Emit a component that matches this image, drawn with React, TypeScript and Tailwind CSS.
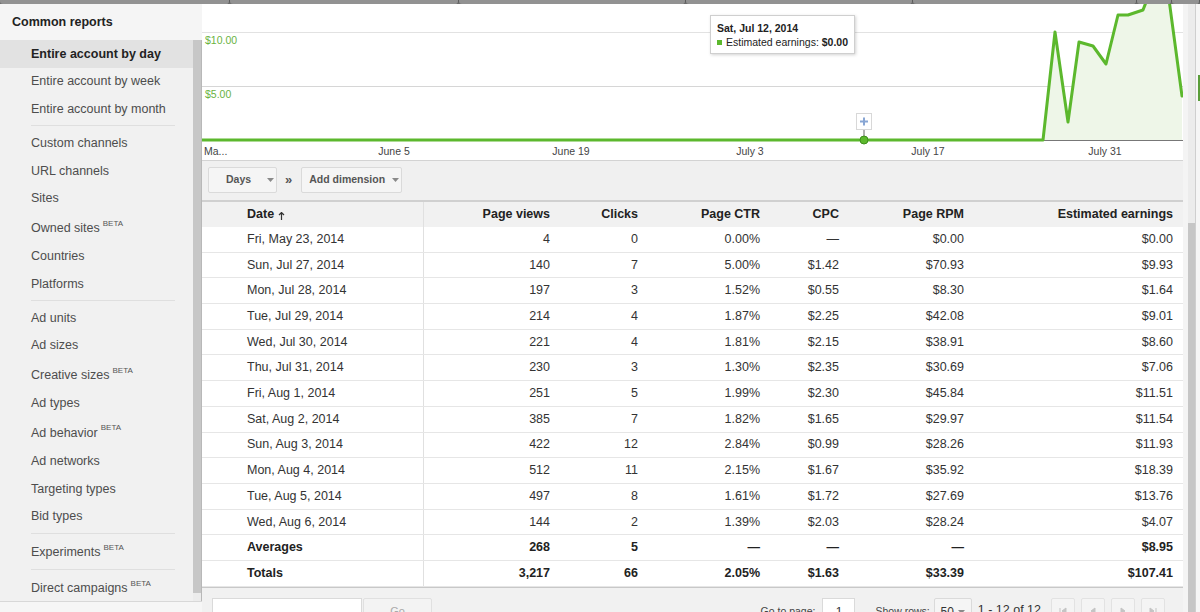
import React from 'react';

type Item = { label: string; beta?: boolean; selected?: boolean };

const groups: Item[][] = [
  [
    { label: 'Entire account by day', selected: true },
    { label: 'Entire account by week' },
    { label: 'Entire account by month' },
  ],
  [
    { label: 'Custom channels' },
    { label: 'URL channels' },
    { label: 'Sites' },
    { label: 'Owned sites', beta: true },
    { label: 'Countries' },
    { label: 'Platforms' },
  ],
  [
    { label: 'Ad units' },
    { label: 'Ad sizes' },
    { label: 'Creative sizes', beta: true },
    { label: 'Ad types' },
    { label: 'Ad behavior', beta: true },
    { label: 'Ad networks' },
    { label: 'Targeting types' },
    { label: 'Bid types' },
  ],
  [{ label: 'Experiments', beta: true }],
  [{ label: 'Direct campaigns', beta: true }],
];

const rows: string[][] = [
  ['Fri, May 23, 2014', '4', '0', '0.00%', '—', '$0.00', '$0.00'],
  ['Sun, Jul 27, 2014', '140', '7', '5.00%', '$1.42', '$70.93', '$9.93'],
  ['Mon, Jul 28, 2014', '197', '3', '1.52%', '$0.55', '$8.30', '$1.64'],
  ['Tue, Jul 29, 2014', '214', '4', '1.87%', '$2.25', '$42.08', '$9.01'],
  ['Wed, Jul 30, 2014', '221', '4', '1.81%', '$2.15', '$38.91', '$8.60'],
  ['Thu, Jul 31, 2014', '230', '3', '1.30%', '$2.35', '$30.69', '$7.06'],
  ['Fri, Aug 1, 2014', '251', '5', '1.99%', '$2.30', '$45.84', '$11.51'],
  ['Sat, Aug 2, 2014', '385', '7', '1.82%', '$1.65', '$29.97', '$11.54'],
  ['Sun, Aug 3, 2014', '422', '12', '2.84%', '$0.99', '$28.26', '$11.93'],
  ['Mon, Aug 4, 2014', '512', '11', '2.15%', '$1.67', '$35.92', '$18.39'],
  ['Tue, Aug 5, 2014', '497', '8', '1.61%', '$1.72', '$27.69', '$13.76'],
  ['Wed, Aug 6, 2014', '144', '2', '1.39%', '$2.03', '$28.24', '$4.07'],
];

const summary: string[][] = [
  ['Averages', '268', '5', '—', '—', '—', '$8.95'],
  ['Totals', '3,217', '66', '2.05%', '$1.63', '$33.39', '$107.41'],
];

const headers = ['Page views', 'Clicks', 'Page CTR', 'CPC', 'Page RPM', 'Estimated earnings'];

const gridCols = 'grid grid-cols-[222px_136px_88px_122px_79px_125px_209px]';

function Caret() {
  return (
    <svg width="7" height="4" viewBox="0 0 7 4" className="shrink-0">
      <path d="M0 0 L7 0 L3.5 4 Z" fill="#8a8a8a" />
    </svg>
  );
}

function SideItem({ item }: { item: Item }) {
  return (
    <div
      className={`flex items-center pl-[31px] ${item.beta ? 'h-[30px] pt-[2px]' : 'h-[27.75px]'} ${
        item.selected ? 'bg-[#e2e2e2] font-bold text-[#222]' : 'text-[#4d4d4d]'
      }`}
    >
      <span className="whitespace-nowrap">{item.label}</span>
      {item.beta && (
        <span className="relative -top-[5px] ml-[3px] text-[8px] leading-none text-[#555]">BETA</span>
      )}
    </div>
  );
}

function Sidebar() {
  return (
    <div className="flex w-[202px] shrink-0 flex-col">
      <div className="flex h-[36px] shrink-0 items-center bg-[#f5f5f5] pl-[12px] text-[12.5px] font-bold text-[#222]">
        Common reports
      </div>
      <div className="flex h-[561px] shrink-0">
        <div className="w-[193px] bg-[#f1f1f1] text-[12.5px]">
          {groups.map((g, gi) => (
            <div key={gi}>
              {gi > 0 && <div className="ml-[31px] mr-[18px] mt-[2px] mb-[3px] border-t border-[#dfdfdf]" />}
              {g.map((it) => (
                <SideItem key={it.label} item={it} />
              ))}
            </div>
          ))}
        </div>
        <div className="flex w-[9px] flex-col border-r border-[#b8b8b8] bg-[#ececec]">
          <div className="h-[553px] bg-[#c7c7c7]" />
        </div>
      </div>
      <div className="flex-1 border-t border-[#d8d8d8] bg-[#f6f6f6]" />
    </div>
  );
}

function Chart() {
  const pts =
    '0,136 841,136 853,28 866,118 877,38 891,42 904,60 916,11 926,11 941,6 948,-12 966,-12 980,92';
  const fill =
    '841,136 853,28 866,118 877,38 891,42 904,60 916,11 926,11 941,6 948,-12 966,-12 980,92 980,136';
  const xl: [string, number][] = [
    ['June 5', 192],
    ['June 19', 369],
    ['July 3', 548],
    ['July 17', 726],
    ['July 31', 903],
  ];
  return (
    <div className="relative h-[156px] shrink-0 overflow-hidden bg-white">
      <svg width="981" height="156" viewBox="0 0 981 156" className="block">
        <line x1="0" y1="28.5" x2="981" y2="28.5" stroke="#e2e2e2" strokeWidth="1" />
        <line x1="0" y1="82.5" x2="981" y2="82.5" stroke="#d6d6d6" strokeWidth="1" />
        <polygon points={fill} fill="#eef6e8" />
        <line x1="841" y1="136.5" x2="981" y2="136.5" stroke="#777" strokeWidth="1" />
        <polyline
          points={pts}
          fill="none"
          stroke="#5cb82d"
          strokeWidth="3"
          strokeLinejoin="round"
          strokeLinecap="round"
        />
        <text x="3" y="40" className="fill-[#6ab33f] text-[10.5px] font-['Liberation_Sans',Arial,sans-serif]">
          $10.00
        </text>
        <text x="3" y="94" className="fill-[#6ab33f] text-[10.5px] font-['Liberation_Sans',Arial,sans-serif]">
          $5.00
        </text>
        <text x="2" y="151" className="fill-[#444] text-[10.5px] font-['Liberation_Sans',Arial,sans-serif]">
          Ma...
        </text>
        {xl.map(([t, x]) => (
          <text
            key={t}
            x={x}
            y="151"
            textAnchor="middle"
            className="fill-[#444] text-[10.5px] font-['Liberation_Sans',Arial,sans-serif]"
          >
            {t}
          </text>
        ))}
        <line x1="662" y1="126" x2="662" y2="133" stroke="#666" strokeWidth="1" />
        <rect x="654.5" y="109.5" width="15" height="16" fill="#fff" stroke="#d8d8d8" />
        <path d="M662 113.5 V121.5 M658 117.5 H666" stroke="#88a6d4" strokeWidth="2" />
        <circle cx="662" cy="136" r="4" fill="#5cb82d" stroke="#3f8f1c" strokeWidth="1" />
      </svg>
      <div className="absolute left-[508px] top-[11px] h-[39px] w-[145px] border border-[#cfcfcf] bg-white px-[6px] pt-[5px] text-[10.5px] leading-[14px] text-[#222] shadow-[1px_1px_3px_rgba(0,0,0,0.18)]">
        <div className="font-bold">Sat, Jul 12, 2014</div>
        <div className="flex items-center whitespace-nowrap">
          <span className="mr-[4px] inline-block h-[5px] w-[5px] bg-[#5cb82d]" />
          <span>Estimated earnings:&nbsp;</span>
          <span className="font-bold">$0.00</span>
        </div>
      </div>
    </div>
  );
}

function Toolbar() {
  return (
    <div className="flex h-[40px] shrink-0 items-start border-t border-[#d3d3d3] bg-[#f0f0f0] pl-[6px] pt-[6px]">
      <div className="flex h-[26px] w-[69px] items-center rounded-[2px] border border-[#dadada] bg-[#f5f5f5] pl-[17px] text-[10.5px] font-bold text-[#555]">
        <span>Days</span>
        <span className="ml-[16px]">
          <Caret />
        </span>
      </div>
      <div className="ml-[8px] mr-[9px] flex h-[26px] items-center text-[13px] font-bold text-[#555]">»</div>
      <div className="flex h-[26px] w-[101px] items-center rounded-[2px] border border-[#dadada] bg-[#f5f5f5] pl-[7px] text-[10.5px] font-bold text-[#555]">
        <span className="whitespace-nowrap">Add dimension</span>
        <span className="ml-[7px]">
          <Caret />
        </span>
      </div>
    </div>
  );
}

function Row({ cells, bold }: { cells: string[]; bold?: boolean }) {
  return (
    <div
      className={`${gridCols} h-[25.7px] border-b border-[#e6e6e6] bg-white text-[12.5px] ${
        bold ? 'font-bold text-[#222]' : 'text-[#333]'
      }`}
    >
      <div className="flex items-center border-r border-[#e0e0e0] pl-[45px] whitespace-nowrap">{cells[0]}</div>
      {cells.slice(1).map((c, i) => (
        <div key={i} className="flex items-center justify-end pr-[10px] whitespace-nowrap">
          {c}
        </div>
      ))}
    </div>
  );
}

function Table() {
  return (
    <div className="shrink-0">
      <div className={`${gridCols} h-[27px] border-t-2 border-[#d0d0d0] bg-[#f1f1f1] text-[12.5px] font-bold text-[#222]`}>
        <div className="flex items-center border-r border-[#e0e0e0] pl-[45px]">
          <span>Date</span>
          <svg width="7" height="8" viewBox="0 0 7 8" className="ml-[4px] mt-[2px]">
            <path d="M3.5 0.5 V8 M1 3 L3.5 0.5 L6 3" stroke="#333" strokeWidth="1.2" fill="none" />
          </svg>
        </div>
        {headers.map((h) => (
          <div key={h} className="flex items-center justify-end pr-[10px] whitespace-nowrap">
            {h}
          </div>
        ))}
      </div>
      {rows.map((r) => (
        <Row key={r[0]} cells={r} />
      ))}
      {summary.map((r) => (
        <Row key={r[0]} cells={r} bold />
      ))}
    </div>
  );
}

function NavBtn({ kind }: { kind: 'first' | 'prev' | 'next' | 'last' }) {
  const paths: Record<string, string> = {
    first: 'M3 3 V9 M9 3 L5 6 L9 9 Z',
    prev: 'M8 3 L4 6 L8 9 Z',
    next: 'M4 3 L8 6 L4 9 Z',
    last: 'M9 3 V9 M3 3 L7 6 L3 9 Z',
  };
  return (
    <div className="flex h-[27px] w-[24px] items-center justify-center rounded-[2px] border border-[#e2e2e2] bg-[#f4f4f4]">
      <svg width="12" height="12" viewBox="0 0 12 12">
        <path d={paths[kind]} fill="#c4c4c4" stroke="#c4c4c4" strokeWidth="1" />
      </svg>
    </div>
  );
}

function Footer() {
  return (
    <div className="flex h-[40px] shrink-0 items-start border-t border-[#c8c8c8] bg-[#f1f1f1] pt-[10px] text-[10.5px] text-[#444]">
      <div className="ml-[10px] h-[28px] w-[150px] border border-[#dadada] bg-white" />
      <div className="ml-[1px] flex h-[28px] w-[69px] items-center justify-center rounded-[2px] border border-[#e0e0e0] bg-[#f3f3f3] text-[11px] text-[#aaa]">
        Go
      </div>
      <div className="ml-auto flex items-start">
        <div className="mt-[6px] whitespace-nowrap">Go to page:</div>
        <div className="ml-[7px] flex h-[28px] w-[33px] items-center justify-center border border-[#dadada] bg-white text-[12px] text-[#333]">
          1
        </div>
        <div className="ml-[20px] mt-[6px] whitespace-nowrap">Show rows:</div>
        <div className="ml-[4px] flex h-[28px] w-[38px] items-center justify-center gap-[4px] rounded-[2px] border border-[#dadada] bg-[#f5f5f5] text-[12px] text-[#333]">
          <span>50</span>
          <Caret />
        </div>
        <div className="ml-[6px] mt-[3px] whitespace-nowrap text-[12.5px] text-[#333]">1 - 12 of 12</div>
        <div className="ml-[10px]">
          <NavBtn kind="first" />
        </div>
        <div className="ml-[6px]">
          <NavBtn kind="prev" />
        </div>
        <div className="ml-[6px]">
          <NavBtn kind="next" />
        </div>
        <div className="ml-[6px] mr-[18px]">
          <NavBtn kind="last" />
        </div>
      </div>
    </div>
  );
}

function RightEdge() {
  return (
    <div className="flex w-[17px] shrink-0">
      <div className="w-[5px] bg-[#f4f4f4]" />
      <div className="flex w-[7px] flex-col bg-[#ececec]">
        <div className="h-[219px] shrink-0" />
        <div className="flex-1 bg-[#c6c6c6]" />
      </div>
      <div className="w-[1px] bg-[#cfcfcf]" />
      <div className="relative w-[4px] bg-[#f6f6f6]">
        <div className="absolute right-0 top-[71px] h-[26px] w-[2px] bg-[#5a9e3a]" />
      </div>
    </div>
  );
}

function TabStrip() {
  const segs = [230, 229, 227, 227, 224, 35, 28];
  return (
    <div className="flex h-[4px] shrink-0 bg-[#6e6e6e]">
      {segs.map((w, i) => (
        <div key={i} style={{ width: w }} className="h-full rounded-b-[3px] border-r border-[#5c5c5c] bg-[#929292]" />
      ))}
    </div>
  );
}

export default function App() {
  return (
    <div className="flex h-[612px] w-[1200px] flex-col overflow-hidden bg-[#f1f1f1] font-['Liberation_Sans',Arial,Helvetica,sans-serif]">
      <TabStrip />
      <div className="flex h-[608px] shrink-0 overflow-hidden">
        <Sidebar />
        <div className="flex h-[608px] w-[981px] shrink-0 flex-col overflow-hidden">
          <Chart />
          <Toolbar />
          <Table />
          <Footer />
        </div>
        <RightEdge />
      </div>
    </div>
  );
}
